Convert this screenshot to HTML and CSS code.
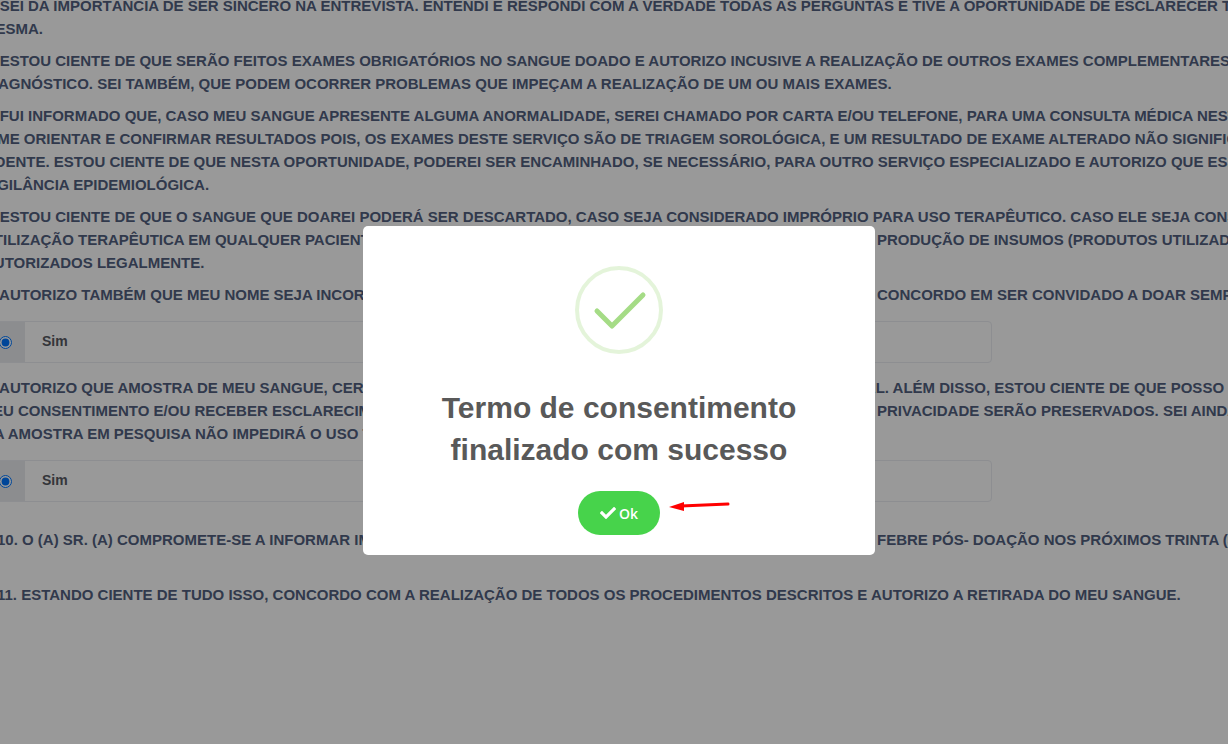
FILE: index.html
```html
<!DOCTYPE html>
<html lang="pt-BR">
    <head>
        <meta charset="UTF-8">
        <meta name="viewport" content="width=device-width, initial-scale=1.0">
        <title>Termo de consentimento</title>

        <link rel="stylesheet" href="styles.css">
    </head>

    <body>

        <main class="termo">
            <p>5. SEI DA IMPORTÂNCIA DE SER SINCERO NA ENTREVISTA. ENTENDI E RESPONDI COM A VERDADE TODAS AS PERGUNTAS E TIVE A OPORTUNIDADE DE ESCLARECER TODAS<br>
            MESMA.</p>

            <p>6. ESTOU CIENTE DE QUE SERÃO FEITOS EXAMES OBRIGATÓRIOS NO SANGUE DOADO E AUTORIZO INCUSIVE A REALIZAÇÃO DE OUTROS EXAMES COMPLEMENTARES PARA<br>
            DIAGNÓSTICO. SEI TAMBÉM, QUE PODEM OCORRER PROBLEMAS QUE IMPEÇAM A REALIZAÇÃO DE UM OU MAIS EXAMES.</p>

            <p>7. FUI INFORMADO QUE, CASO MEU SANGUE APRESENTE ALGUMA ANORMALIDADE, SEREI CHAMADO POR CARTA E/OU TELEFONE, PARA UMA CONSULTA MÉDICA NESTE SE<br>
            E ME ORIENTAR E CONFIRMAR RESULTADOS POIS, OS EXAMES DESTE SERVIÇO SÃO DE TRIAGEM SOROLÓGICA, E UM RESULTADO DE EXAME ALTERADO NÃO SIGNIFICA QU<br>
            DOENTE. ESTOU CIENTE DE QUE NESTA OPORTUNIDADE, PODEREI SER ENCAMINHADO, SE NECESSÁRIO, PARA OUTRO SERVIÇO ESPECIALIZADO E AUTORIZO QUE ESSES R<br>
            VIGILÂNCIA EPIDEMIOLÓGICA.</p>

            <p>8. ESTOU CIENTE DE QUE O SANGUE QUE DOAREI PODERÁ SER DESCARTADO, CASO SEJA CONSIDERADO IMPRÓPRIO PARA USO TERAPÊUTICO. CASO ELE SEJA CONSIDER<br>
            <span class="linha"><span>UTILIZAÇÃO TERAPÊUTICA EM QUALQUER PACIENTE</span><span>PRODUÇÃO DE INSUMOS (PRODUTOS UTILIZADO</span></span>
            AUTORIZADOS LEGALMENTE.</p>

            <p><span class="linha"><span>9. AUTORIZO TAMBÉM QUE MEU NOME SEJA INCORP</span><span>CONCORDO EM SER CONVIDADO A DOAR SEMPR</span></span></p>

            <div class="opcao">
                <span class="opcao-radio"><input type="radio" id="cadastro" name="cadastro" checked></span>
                <label for="cadastro">Sim</label>
            </div>

            <p><span class="linha linha-legal"><span>9. AUTORIZO QUE AMOSTRA DE MEU SANGUE, CERC</span><span>LEGAL. ALÉM DISSO, ESTOU CIENTE DE QUE POSSO</span></span>
            <span class="linha"><span>SEU CONSENTIMENTO E/OU RECEBER ESCLARECIME</span><span>PRIVACIDADE SERÃO PRESERVADOS. SEI AINDA</span></span>
            DA AMOSTRA EM PESQUISA NÃO IMPEDIRÁ O USO TR</p>

            <div class="opcao">
                <span class="opcao-radio"><input type="radio" id="pesquisa" name="pesquisa" checked></span>
                <label for="pesquisa">Sim</label>
            </div>

            <div class="final">
                <p><span class="linha linha-final"><span>10. O (A) SR. (A) COMPROMETE-SE A INFORMAR IME</span><span>FEBRE PÓS- DOAÇÃO NOS PRÓXIMOS TRINTA (30</span></span></p>
                <p>11. ESTANDO CIENTE DE TUDO ISSO, CONCORDO COM A REALIZAÇÃO DE TODOS OS PROCEDIMENTOS DESCRITOS E AUTORIZO A RETIRADA DO MEU SANGUE.</p>
            </div>
        </main>

        <div class="fundo">
            <div class="modal" role="dialog" aria-labelledby="titulo">
                <svg class="sucesso" viewBox="0 0 88 88" aria-hidden="true">
                    <circle cx="44" cy="44" r="42"/>
                    <path d="M22 45L37 60L68 29"/>
                </svg>
                <h2 id="titulo">Termo de consentimento finalizado com sucesso</h2>
                <div class="acoes">
                    <button class="btn" type="button">
                        <svg viewBox="0 0 512 512" aria-hidden="true"><path d="M174 439L7 273c-10-10-10-26 0-36l37-36c10-10 26-10 36 0l112 112L432 73c10-10 26-10 36 0l37 36c10 10 10 26 0 36L210 439c-10 10-26 10-36 0z"/></svg>
                        Ok
                    </button>
                    <svg class="seta" viewBox="0 0 64 12" aria-hidden="true">
                        <path class="haste" d="M12 5L59 3"/>
                        <path d="M0 6L15 1L15 10Z"/>
                    </svg>
                </div>
            </div>
        </div>

    </body>
</html>
```
FILE: styles.css
```css
*{
    box-sizing: border-box;
}
body{
    margin: 0;
    height: 100vh;
    overflow: hidden;
    background-color: #fff;
    font-family: "Liberation Sans", Arial, Helvetica, sans-serif;
    font-size: 15px;
    font-weight: bold;
    line-height: 23px;
    color: #525f7f;
}
.termo{
    overflow: hidden;
    margin-top: -6px;
    margin-left: -17px;
    white-space: nowrap;
}
.termo p{
    margin: 0 0 9px;
}
/* linhas com o trecho do meio atras do modal */
.linha{
    display: grid;
    grid-template-columns: 894px auto;
}
.linha-legal{
    grid-template-columns: 851px auto;
}
.linha-final{
    grid-template-columns: 880px auto;
}
.opcao{
    display: flex;
    width: 1009px;
    height: 42px;
    margin: 15px 0 13px;
    border: 1px solid #ebedf2;
    border-radius: 4px;
}
.opcao-radio{
    display: flex;
    align-items: center;
    padding: 0 13px 0 15px;
    background-color: #e9ecef;
}
.opcao-radio input{
    width: 13px;
    height: 13px;
    margin: 0;
}
.opcao label{
    flex: 1;
    padding: 8px 17px;
    font-size: 14px;
    color: #575962;
}
.final{
    padding: 13px 0 0 14px;
}
.final p{
    margin-bottom: 32px;
}
.fundo{
    position: fixed;
    inset: 0;
    display: flex;
    align-items: center;
    justify-content: center;
    padding: 37px 0 0 10px;
    background-color: rgba(0, 0, 0, .4);
}
.modal{
    display: flex;
    flex-direction: column;
    align-items: center;
    width: 512px;
    padding: 40px 20px 20px;
    border-radius: 5px;
    background-color: #fff;
    text-align: center;
}
.sucesso{
    width: 88px;
    fill: none;
    stroke: #a5dc86;
    stroke-width: 5;
    stroke-linecap: round;
    stroke-linejoin: round;
}
.sucesso circle{
    stroke-width: 4;
    stroke-opacity: .3;
}
.modal h2{
    max-width: 400px;
    margin: 33px 0 20px;
    font-size: 30px;
    line-height: 42px;
    color: #595959;
}
.acoes{
    position: relative;
}
.btn{
    display: flex;
    align-items: center;
    gap: 3px;
    height: 44px;
    padding: 0 22px;
    border: none;
    border-radius: 22px;
    background-color: #47d34b;
    font-family: "Open Sans", "Liberation Sans", sans-serif;
    font-size: 14px;
    font-weight: 600;
    color: #fff;
    cursor: pointer;
}
.btn svg{
    width: 16px;
    fill: #fff;
}
.seta{
    position: absolute;
    top: 10px;
    left: 91px;
    width: 64px;
    fill: #f00;
}
.haste{
    stroke: #f00;
    stroke-width: 3;
    stroke-linecap: round;
}
```
